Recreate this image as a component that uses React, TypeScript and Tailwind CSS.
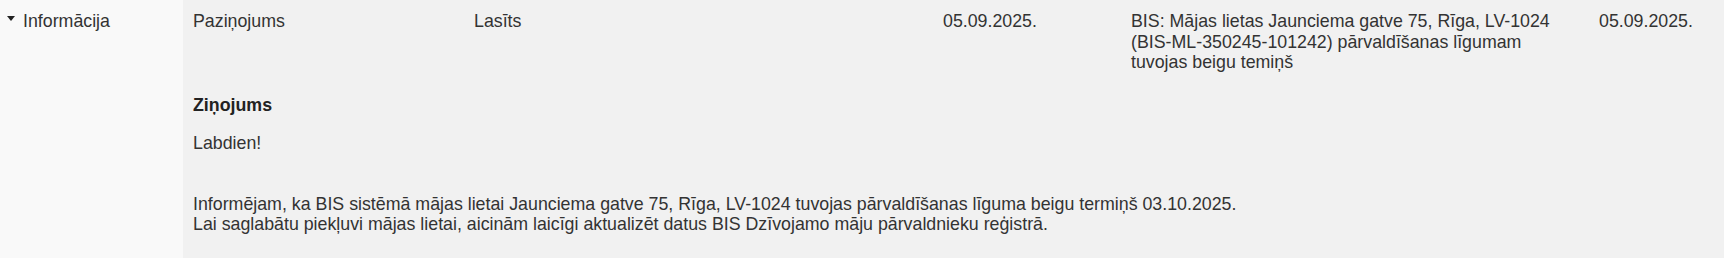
export default function App() {
  return (
    <div className="w-[1724px] h-[258px] flex bg-[#f1f1f1] text-[#333333] font-['Liberation_Sans',Arial,sans-serif] text-[17.8px] leading-[20.5px]">
      {/* Group label column */}
      <div className="w-[183px] shrink-0 bg-[#f9f9f9] pt-[11px] pl-[7px] flex items-start">
        <span className="mt-[5px] mr-[8px] block w-0 h-0 border-l-[4px] border-r-[4px] border-t-[5px] border-l-transparent border-r-transparent border-t-[#222222]" />
        <span>Informācija</span>
      </div>

      {/* Row + expanded message */}
      <div className="flex-1 flex flex-col">
        <div className="grid grid-cols-[281px_469px_188px_468px_1fr] pt-[11px]">
          <div className="pl-[10px]">Paziņojums</div>
          <div className="pl-[10px]">Lasīts</div>
          <div className="pl-[10px]">05.09.2025.</div>
          <div className="pl-[10px] pr-[20px]">
            BIS: Mājas lietas Jaunciema gatve 75, Rīga, LV-1024 (BIS-ML-350245-101242) pārvaldīšanas līgumam tuvojas beigu temiņš
          </div>
          <div className="pl-[10px]">05.09.2025.</div>
        </div>

        <div className="pl-[10px] pt-[22px]">
          <div className="font-bold text-[#222222]">Ziņojums</div>
          <p className="mt-[18px]">Labdien!</p>
          <p className="mt-[40px]">
            Informējam, ka BIS sistēmā mājas lietai Jaunciema gatve 75, Rīga, LV-1024 tuvojas pārvaldīšanas līguma beigu termiņš 03.10.2025.
            <br />
            Lai saglabātu piekļuvi mājas lietai, aicinām laicīgi aktualizēt datus BIS Dzīvojamo māju pārvaldnieku reģistrā.
          </p>
        </div>
      </div>
    </div>
  );
}
